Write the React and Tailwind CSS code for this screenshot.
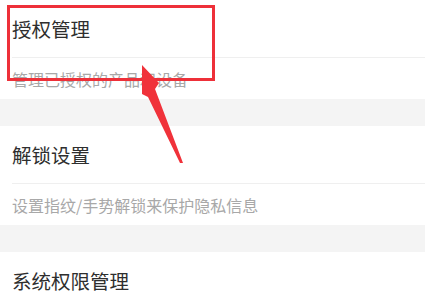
import React from "react";

const sections = [
  { title: "授权管理", desc: "管理已授权的产品和设备" },
  { title: "解锁设置", desc: "设置指纹/手势解锁来保护隐私信息" },
  { title: "系统权限管理", desc: "" },
];

const Section = ({ title, desc }) => (
  <div className="bg-white">
    <div className="flex h-[57px] items-center pl-3 text-[19.5px] text-[#2e2e2e]">{title}</div>
    {desc && (
      <>
        <div className="ml-3 h-px bg-[#efefef]" />
        <div className="flex h-[41px] items-center pl-3 text-[16px] text-[#a8a8a8]">{desc}</div>
      </>
    )}
  </div>
);

export default function App() {
  return (
    <div
      className="relative h-[298px] w-[425px] overflow-hidden bg-white"
      style={{ fontFamily: '"Noto Sans CJK SC", "Noto Sans", sans-serif' }}
    >
      <Section {...sections[0]} />
      <div className="h-[27px] bg-[#f4f4f4]" />
      <Section {...sections[1]} />
      <div className="h-[27px] bg-[#f4f4f4]" />
      <Section {...sections[2]} />

      {/* highlight box */}
      <div className="absolute left-[7px] top-[5px] h-[76px] w-[208px] border-[3px] border-[#ee3039]" />

      {/* arrow */}
      <svg className="absolute left-0 top-0" width="425" height="298" viewBox="0 0 425 298">
        <polygon
          points="142,65 159,83 155,89 183,163 180,163 148,97 142,94"
          fill="#f0323a"
        />
      </svg>
    </div>
  );
}
